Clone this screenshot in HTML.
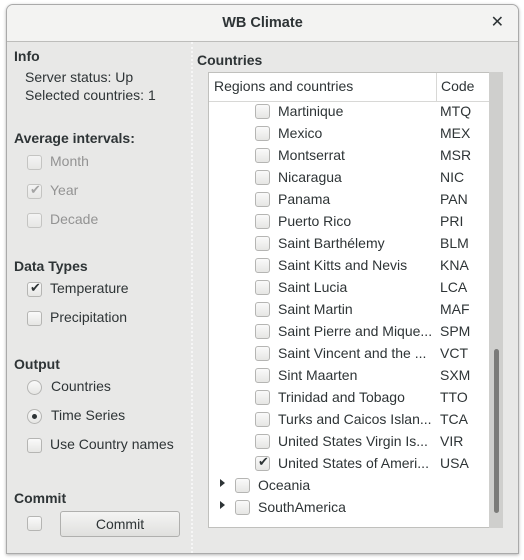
<!DOCTYPE html><html><head><style>
body{margin:0;width:524px;height:560px;background:#fff;font-family:"Liberation Sans","DejaVu Sans",sans-serif;font-size:14px;color:#2e3436;position:relative;overflow:hidden}
.win{position:absolute;left:6px;top:4px;width:511px;height:548px;border:1px solid #aaa;border-radius:7px 7px 0 0;background:#e8e8e7;overflow:hidden;box-shadow:0 1px 3px rgba(0,0,0,.3)}
.title{position:absolute;left:0;top:0;right:0;height:36px;background:#f3f3f2;border-bottom:1px solid #bdbdbb;text-align:center;line-height:36px;font-weight:bold;font-size:14.5px}
.x{position:absolute;right:14px;top:0;font-size:16px;font-weight:bold}
.a{position:absolute;white-space:nowrap}
.b{font-weight:bold}
.cb{position:absolute;width:13px;height:13px;border:1px solid #b5b5b3;border-radius:3px;background:linear-gradient(#fafafa,#e6e6e4)}
.dis{color:#939393}
.rb{position:absolute;width:13px;height:13px;border:1px solid #b5b5b3;border-radius:50%;background:linear-gradient(#fafafa,#e6e6e4)}
.sep{position:absolute;left:184px;top:37px;width:0;height:511px;border-left:2px dotted #f6f6f6}
.tree{position:absolute;left:201px;top:67px;width:281px;height:454px;background:#fff;border:1px solid #c0c0bd;overflow:hidden}
.hdr{position:absolute;left:0;top:0;width:281px;height:28px;border-bottom:1px solid #d8d8d6;line-height:27px}
.sb{position:absolute;left:482px;top:67px;width:14px;height:456px;background:#cfcfcd}
.th{position:absolute;left:487px;top:344px;width:5px;height:164px;background:#7b7b79;border-radius:3px}
.chk{position:absolute;left:2px;top:-3px;font-size:13px;color:#2e3436}
</style></head><body>
<div class="win">
<div class="title">WB Climate<span class="x">✕</span></div>
<div class="sep"></div>
<div class="a b" style="left:7px;top:43px">Info</div>
<div class="a" style="left:18px;top:64px">Server status: Up</div>
<div class="a" style="left:18px;top:82px">Selected countries: 1</div>
<div class="a b" style="left:7px;top:125px">Average intervals:</div>
<div class="cb" style="left:20px;top:150px;opacity:.7"></div><div class="a dis" style="left:43px;top:148px">Month</div>
<div class="cb" style="left:20px;top:179px;opacity:.7"><span class="chk" style="color:#888">✔</span></div><div class="a dis" style="left:43px;top:177px">Year</div>
<div class="cb" style="left:20px;top:208px;opacity:.7"></div><div class="a dis" style="left:43px;top:206px">Decade</div>
<div class="a b" style="left:7px;top:253px">Data Types</div>
<div class="cb" style="left:20px;top:277px"><span class="chk">✔</span></div><div class="a" style="left:43px;top:275px">Temperature</div>
<div class="cb" style="left:20px;top:306px"></div><div class="a" style="left:43px;top:304px">Precipitation</div>
<div class="a b" style="left:7px;top:351px">Output</div>
<div class="rb" style="left:20px;top:375px"></div><div class="a" style="left:44px;top:373px">Countries</div>
<div class="rb" style="left:20px;top:404px"><div style="position:absolute;left:4px;top:4px;width:5px;height:5px;border-radius:50%;background:#2e3436"></div></div><div class="a" style="left:44px;top:402px">Time Series</div>
<div class="cb" style="left:20px;top:433px"></div><div class="a" style="left:43px;top:431px">Use Country names</div>
<div class="a b" style="left:7px;top:485px">Commit</div>
<div class="cb" style="left:20px;top:511px"></div>
<div style="position:absolute;left:53px;top:506px;width:118px;height:24px;border:1px solid #b0b0ae;border-radius:3px;background:linear-gradient(#f4f4f3,#e0e0de);text-align:center;line-height:24px">Commit</div>
<div class="a b" style="left:190px;top:47px">Countries</div>
<div class="tree">
<div class="hdr"><span class="a" style="left:5px">Regions and countries</span><span style="position:absolute;left:227px;top:0;height:28px;border-left:1px solid #d8d8d6"></span><span class="a" style="left:232px">Code</span></div>
<div id="rows"></div>
</div>
<div class="sb"></div><div class="th"></div>
</div>
<script>
var r=[["Martinique","MTQ"],["Mexico","MEX"],["Montserrat","MSR"],["Nicaragua","NIC"],["Panama","PAN"],["Puerto Rico","PRI"],["Saint Barthélemy","BLM"],["Saint Kitts and Nevis","KNA"],["Saint Lucia","LCA"],["Saint Martin","MAF"],["Saint Pierre and Mique...","SPM"],["Saint Vincent and the ...","VCT"],["Sint Maarten","SXM"],["Trinidad and Tobago","TTO"],["Turks and Caicos Islan...","TCA"],["United States Virgin Is...","VIR"],["United States of Ameri...","USA",1],["Oceania","",0,1],["SouthAmerica","",0,1]];
var h="";r.forEach(function(e,i){var y=28+i*22;var cx=e[3]?26:46,tx=e[3]?49:69;
if(e[3])h+='<div class="a" style="left:11px;top:'+(y+4)+'px;width:0;height:0;border-top:4px solid transparent;border-bottom:4px solid transparent;border-left:5px solid #2e3436"></div>';
h+='<div class="cb" style="left:'+cx+'px;top:'+(y+3)+'px">'+(e[2]?'<span class="chk">✔</span>':'')+'</div>';
h+='<div class="a" style="left:'+tx+'px;top:'+(y+2)+'px">'+e[0]+'</div><div class="a" style="left:231px;top:'+(y+2)+'px">'+e[1]+'</div>';});
document.getElementById("rows").innerHTML=h;
</script>
</body></html>
